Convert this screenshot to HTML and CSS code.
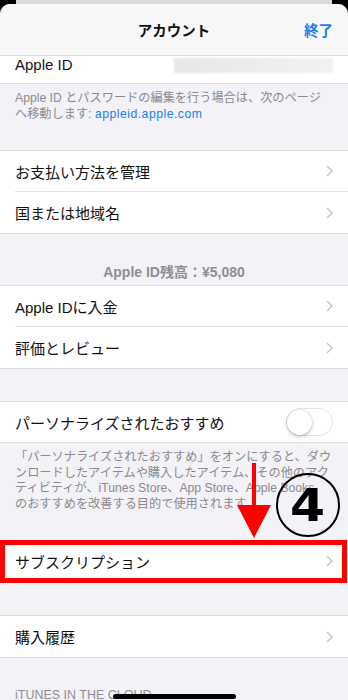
FILE: index.html
```html
<!DOCTYPE html>
<html lang="ja">
<head>
<meta charset="utf-8">
<title>アカウント</title>
<link rel="stylesheet" href="styles.css">
</head>
<body>
<div class="screen">
  <div class="backcard"></div>
  <div class="sheet">
    <header class="nav">
      <span></span>
      <span class="nav-title">アカウント</span>
      <span class="nav-done">終了</span>
    </header>

    <div class="row-id"><span>Apple ID</span><span class="blur"></span></div>
    <p class="footer">Apple ID とパスワードの編集を行う場合は、次のページ<br>へ移動します: <span class="link">appleid.apple.com</span></p>

    <div class="group">
      <div class="row"><div class="cell"><span>お支払い方法を管理</span><svg class="chev" viewBox="0 0 7 12"><path d="M1 1 L6 6 L1 11"/></svg></div></div>
      <div class="row"><div class="cell"><span>国または地域名</span><svg class="chev" viewBox="0 0 7 12"><path d="M1 1 L6 6 L1 11"/></svg></div></div>
    </div>

    <p class="balance">Apple ID残高：¥5,080</p>

    <div class="group">
      <div class="row"><div class="cell"><span>Apple IDに入金</span><svg class="chev" viewBox="0 0 7 12"><path d="M1 1 L6 6 L1 11"/></svg></div></div>
      <div class="row"><div class="cell"><span>評価とレビュー</span><svg class="chev" viewBox="0 0 7 12"><path d="M1 1 L6 6 L1 11"/></svg></div></div>
    </div>

    <div class="spacer"></div>

    <div class="group">
      <div class="row toggle-row"><div class="cell"><span>パーソナライズされたおすすめ</span><span class="switch"><span class="knob"></span></span></div></div>
    </div>
    <p class="footer footer2">「パーソナライズされたおすすめ」をオンにすると、ダウ<br>ンロードしたアイテムや購入したアイテム、その他のアク<br>ティビティが、iTunes Store、App Store、Apple Books<br>のおすすめを改善する目的で使用されます。</p>

    <div class="group highlight">
      <div class="row"><div class="cell"><span>サブスクリプション</span><svg class="chev" viewBox="0 0 7 12"><path d="M1 1 L6 6 L1 11"/></svg></div></div>
      <div class="redbox"></div>
    </div>

    <div class="spacer"></div>

    <div class="group">
      <div class="row"><div class="cell"><span>購入履歴</span><svg class="chev" viewBox="0 0 7 12"><path d="M1 1 L6 6 L1 11"/></svg></div></div>
    </div>

    <p class="itunes">iTUNES IN THE CLOUD</p>

    <svg class="arrow" viewBox="0 0 36 76" width="36" height="76"><rect x="16" y="0" width="4" height="44" fill="#ff0000"/><polygon points="1,42 35,42 18,75" fill="#ff0000"/></svg>
    <div class="badge"><span class="badge-num">4</span></div>
  </div>
  <div class="home"></div>
</div>
</body>
</html>
```

FILE: styles.css
```css
html, body {
  margin: 0;
  padding: 0;
  height: 700px;
  overflow: hidden;
  background: #000;
}

.screen {
  width: 348px;
  height: 700px;
  position: relative;
  overflow: hidden;
  background: #000;
  font-family: "Liberation Sans", "Noto Sans CJK JP", sans-serif;
}

.backcard {
  height: 4px;
  margin: 0 16px;
  background: #dadadc;
}

.sheet {
  position: relative;
  height: 696px;
  overflow: hidden;
  background: #f2f2f7;
  border-radius: 10px 10px 0 0;
}

.nav {
  height: 51px;
  display: grid;
  grid-template-columns: 1fr auto 1fr;
  align-items: center;
  padding: 0 15px;
  background: #f8f8f9;
  border-bottom: 1px solid #dcdcdf;
}

.nav-title {
  font-size: 14.5px;
  font-weight: 700;
  color: #111;
}

.nav-done {
  justify-self: end;
  font-size: 14.5px;
  font-weight: 700;
  color: #1a7cf5;
}

.row-id {
  height: 27px;
  display: flex;
  padding: 0 15px;
  background: #fff;
  border-bottom: 1px solid #dcdcdf;
  font-size: 15px;
  line-height: 18px;
  color: #111;
}

.blur {
  margin-left: auto;
  margin-top: 2px;
  width: 159px;
  height: 15px;
  background: linear-gradient(90deg, #e7e7e8, #f2f2f3);
  filter: blur(0.8px);
}

.footer {
  margin: 0;
  padding: 6px 15px 28px;
  font-size: 12.2px;
  line-height: 16px;
  color: #8a8a8e;
}

.footer2 {
  padding-top: 7px;
  line-height: 15.5px;
}

.link {
  color: #1a7cf5;
  letter-spacing: 0.5px;
}

.group {
  background: #fff;
  border-top: 1px solid #dcdcdf;
  border-bottom: 1px solid #dcdcdf;
}

.row {
  display: flex;
  height: 41px;
  padding-left: 15px;
}

.toggle-row {
  height: 40px;
}

.cell {
  flex: 1;
  display: flex;
  align-items: center;
  justify-content: space-between;
  padding-right: 15px;
  border-bottom: 1px solid #e2e2e5;
  font-size: 15px;
  color: #111;
}

.row:last-of-type .cell {
  border-bottom: none;
}

.chev {
  width: 7px;
  height: 12px;
  fill: none;
  stroke: #c4c4c8;
  stroke-width: 1.4;
}

.balance {
  margin: 0;
  padding: 30px 0 5px;
  text-align: center;
  font-size: 14px;
  line-height: 16px;
  font-weight: 600;
  color: #8e8e93;
}

.spacer {
  height: 32px;
}

.switch {
  width: 47px;
  height: 28px;
  box-sizing: border-box;
  border: 1.5px solid #e3e3e7;
  border-radius: 14px;
  background: #fff;
  display: flex;
  align-items: center;
}

.knob {
  width: 25px;
  height: 25px;
  border-radius: 50%;
  background: #fff;
  box-shadow: 0 2px 4px rgba(0, 0, 0, 0.22), 0 0 0 0.5px rgba(0, 0, 0, 0.1);
}

.highlight {
  position: relative;
}

.redbox {
  position: absolute;
  top: -1px;
  bottom: -1px;
  left: 0;
  width: 347px;
  box-sizing: border-box;
  border: 5px solid #ff0000;
}

.itunes {
  margin: 0;
  padding: 29px 15px 0;
  font-size: 12.5px;
  line-height: 16px;
  color: #8e8e93;
}

.arrow {
  position: absolute;
  left: 236px;
  top: 459px;
}

.badge {
  position: absolute;
  left: 276px;
  top: 469px;
  width: 64px;
  height: 64px;
  box-sizing: border-box;
  border: 2.5px solid #000;
  border-radius: 50%;
  display: flex;
  align-items: center;
  justify-content: center;
}

.badge-num {
  font-family: "DejaVu Sans", sans-serif;
  font-weight: 700;
  font-size: 45px;
  line-height: 1;
  color: #000;
  transform: scaleX(1.12);
}

.home {
  position: absolute;
  left: 113px;
  bottom: 1px;
  width: 123px;
  height: 5px;
  border-radius: 3px;
  background: #000;
}
```
